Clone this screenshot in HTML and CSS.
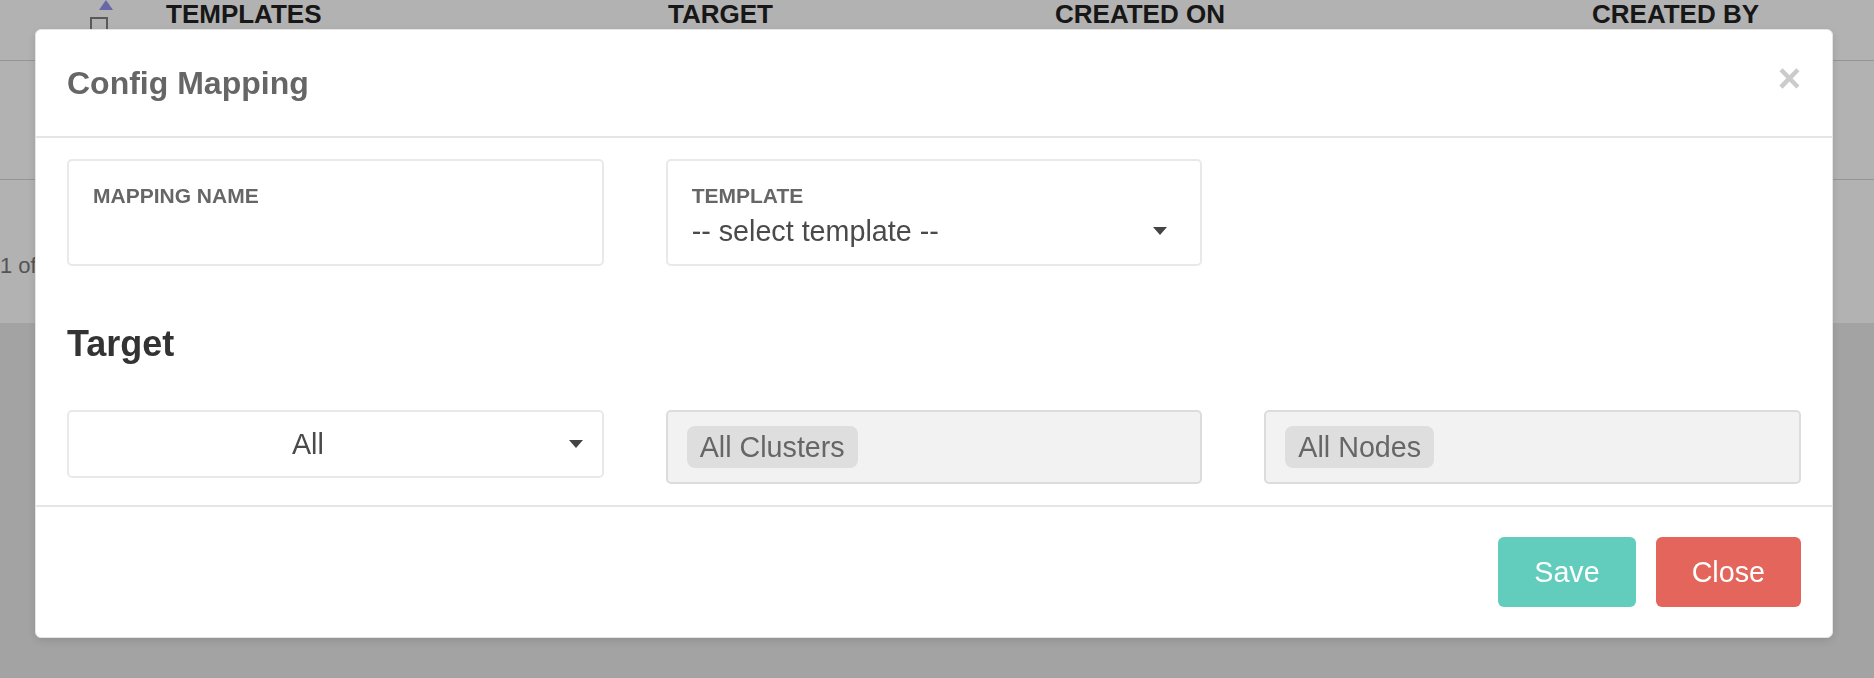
FILE: index.html
```html
<!DOCTYPE html>
<html lang="en">
<head>
<meta charset="utf-8">
<title>Config Mapping</title>
<link rel="stylesheet" href="styles.css">
</head>
<body>
<div class="page">
  <div class="card">
    <div class="thead">
      <div class="th th-check"><span class="sort-up"></span><span class="checkbox"></span></div>
      <div class="th">TEMPLATES</div>
      <div class="th">TARGET</div>
      <div class="th">CREATED ON</div>
      <div class="th">CREATED BY</div>
    </div>
    <div class="trow"></div>
    <div class="pager">1 of 1</div>
  </div>
</div>
<div class="backdrop">
  <div class="modal">
    <div class="modal-header">
      <h4 class="modal-title">Config Mapping</h4>
      <button class="close" type="button">×</button>
    </div>
    <div class="modal-body">
      <div class="form-row">
        <div class="field">
          <div class="field-label">MAPPING NAME</div>
        </div>
        <div class="field">
          <div class="field-label">TEMPLATE</div>
          <div class="select-line"><span>-- select template --</span><span class="caret"></span></div>
        </div>
      </div>
      <h3 class="section-title">Target</h3>
      <div class="target-row">
        <div class="select-box"><span class="select-value">All</span><span class="caret"></span></div>
        <div class="tag-box"><span class="tag">All Clusters</span></div>
        <div class="tag-box"><span class="tag">All Nodes</span></div>
      </div>
    </div>
    <div class="modal-footer">
      <button class="btn btn-save" type="button">Save</button>
      <button class="btn btn-close" type="button">Close</button>
    </div>
  </div>
</div>
</body>
</html>
```
FILE: styles.css
```css
* { box-sizing: border-box; }
html, body {
  margin: 0;
  padding: 0;
  height: 100%;
}
body {
  background: #eaeaea;
  font-family: "Liberation Sans", Arial, sans-serif;
  overflow: hidden;
}
.page { width: 100%; }
.card {
  background: #fff;
  height: 323px;
}
.thead {
  display: grid;
  grid-template-columns: 76px 502px 387px 537px 1fr;
  padding-left: 90px;
  height: 61px;
  border-bottom: 1px solid #d6d6d6;
}
.th {
  font-size: 26px;
  font-weight: bold;
  color: #222;
  line-height: 28px;
}
.th-check {
  display: flex;
  flex-direction: column;
  align-items: flex-start;
}
.sort-up {
  width: 0;
  height: 0;
  margin-left: 9px;
  border-left: 7px solid transparent;
  border-right: 7px solid transparent;
  border-bottom: 10px solid #9494f2;
}
.checkbox {
  width: 18px;
  height: 18px;
  margin-top: 7px;
  border: 2px solid #808080;
}
.trow {
  height: 119px;
  border-bottom: 1px solid #d6d6d6;
}
.pager {
  padding-top: 73px;
  font-size: 22px;
  line-height: 26px;
  color: #7a7a7a;
}
.backdrop {
  position: fixed;
  inset: 0;
  background: rgba(0, 0, 0, 0.3);
}
.modal {
  margin: 29px 41px 0 35px;
  background: #fff;
  border: 1px solid #e4e4e4;
  border-radius: 6px;
  box-shadow: 0 3px 10px rgba(0, 0, 0, 0.12);
}
.modal-header {
  display: flex;
  justify-content: space-between;
  align-items: center;
  height: 108px;
  padding: 0 31px;
  border-bottom: 2px solid #e5e5e5;
}
.modal-title {
  margin: 0;
  font-size: 32px;
  font-weight: bold;
  color: #666;
  line-height: 38px;
}
.close {
  align-self: flex-start;
  margin-top: 28px;
  padding: 0;
  border: 0;
  background: none;
  font-family: "Liberation Sans", Arial, sans-serif;
  font-size: 40px;
  font-weight: bold;
  line-height: 40px;
  color: #cbcbcb;
}
.modal-body {
  padding: 21px 31px 21px;
}
.form-row, .target-row {
  display: grid;
  grid-template-columns: repeat(3, 1fr);
  column-gap: 62px;
  align-items: start;
}
.field {
  height: 107px;
  border: 2px solid #e9e9e9;
  border-radius: 5px;
  padding: 26px 33px 0 24px;
}
.field-label {
  font-size: 21px;
  font-weight: bold;
  color: #666;
  line-height: 18px;
}
.select-line {
  display: flex;
  justify-content: space-between;
  align-items: center;
  margin-top: 13px;
  font-size: 28.7px;
  line-height: 26px;
  color: #4a4a4a;
}
.caret {
  width: 0;
  height: 0;
  border-left: 7px solid transparent;
  border-right: 7px solid transparent;
  border-top: 8px solid #444;
}
.section-title {
  margin: 59px 0 47px;
  font-size: 36px;
  font-weight: bold;
  line-height: 38px;
  color: #333;
}
.select-box {
  display: flex;
  align-items: center;
  height: 68px;
  border: 2px solid #e9e9e9;
  border-radius: 5px;
  padding: 0 19px 0 24px;
  background: #fff;
}
.select-value {
  flex: 1;
  text-align: center;
  font-size: 28.7px;
  color: #4a4a4a;
}
.select-box .caret { margin-left: 46px; }
.tag-box {
  display: flex;
  align-items: center;
  height: 74px;
  border: 2px solid #dcdcdc;
  border-radius: 5px;
  padding: 0 19px;
  background: #f2f2f2;
}
.tag {
  background: #dedede;
  border-radius: 8px;
  padding: 0 13px;
  font-size: 28.7px;
  line-height: 42px;
  color: #666;
}
.modal-footer {
  display: flex;
  justify-content: flex-end;
  gap: 20px;
  padding: 30px 31px 30px;
  border-top: 2px solid #e5e5e5;
}
.btn {
  height: 70px;
  padding: 0 36px;
  border: 0;
  border-radius: 6px;
  font-family: "Liberation Sans", Arial, sans-serif;
  font-size: 28.7px;
  color: #fff;
}
.btn-save { background: #62cdbd; }
.btn-close { background: #e3655b; }
```
